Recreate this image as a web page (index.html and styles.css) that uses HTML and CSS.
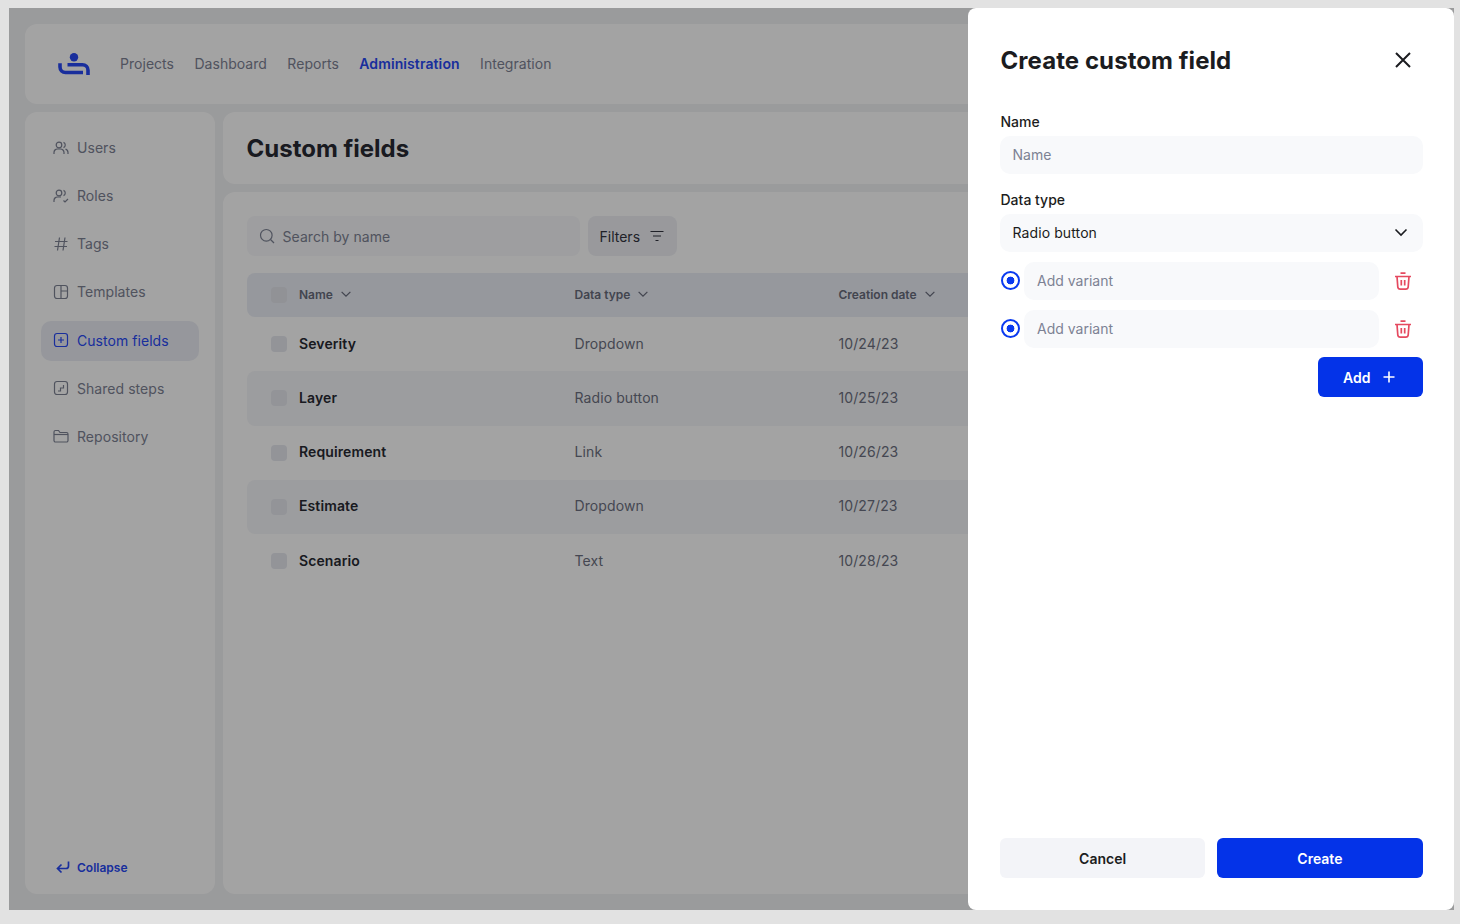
FILE: index.html
```html
<!DOCTYPE html>
<html lang="en">
<head>
	<title>Custom fields</title>
	<meta charset="utf-8" />
	<link rel="stylesheet" href="styles.css">
</head>
<body>
	<div class="frame">
		<header class="topbar">
			<svg class="logo" width="32" height="22" viewBox="0 0 32 22">
				<circle cx="16" cy="4.200" r="4.200" fill="#2849f5" />
				<path d="M2 10.300V14a5.500 5.500 0 0 0 5.500 5.500H25M9.500 11.700h15a5.500 5.500 0 0 1 5.500 5.500V22" fill="none" stroke="#2849f5" stroke-width="3.600" />
			</svg>
			<nav class="topnav">
				<a>Projects</a>
				<a>Dashboard</a>
				<a>Reports</a>
				<a class="current">Administration</a>
				<a>Integration</a>
			</nav>
		</header>

		<div class="workspace">
			<aside class="sidebar">
				<ul class="menu">
					<li class="menu-item">
						<svg class="ico" viewBox="0 0 16 16"><circle cx="6" cy="5" r="2.800" /><path d="M1 14v-1.500A3.500 3.500 0 0 1 4.500 9h3a3.500 3.500 0 0 1 3.500 3.500V14M10.500 2.400a2.800 2.800 0 0 1 0 5.200M12.500 9.200a3.500 3.500 0 0 1 2.500 3.300V14" /></svg>
						Users
					</li>
					<li class="menu-item">
						<svg class="ico" viewBox="0 0 16 16"><circle cx="6" cy="5" r="2.800" /><path d="M1 14v-1.500A3.500 3.500 0 0 1 4.500 9H8M10.500 2.400a2.800 2.800 0 0 1 0 5.200M10.500 12.500l1.500 1.500 3-3" /></svg>
						Roles
					</li>
					<li class="menu-item">
						<svg class="ico" viewBox="0 0 16 16"><path d="M6.500 1.500L4.500 14.500M12 1.500L10 14.500M2 5.500h12.500M1.500 10.500H14" /></svg>
						Tags
					</li>
					<li class="menu-item">
						<svg class="ico" viewBox="0 0 16 16"><rect x="1.500" y="1.500" width="13" height="13" rx="2.500" /><path d="M8 1.500v13M8 7h6.500" /></svg>
						Templates
					</li>
					<li class="menu-item active">
						<svg class="ico" viewBox="0 0 16 16"><rect x="1.500" y="1.500" width="13" height="13" rx="2.500" /><path d="M8 5v6M5 8h6" /></svg>
						Custom fields
					</li>
					<li class="menu-item">
						<svg class="ico" viewBox="0 0 16 16"><rect x="1.500" y="1.500" width="13" height="13" rx="2.500" /><path d="M5 11h2.500V8H10.500V5" /></svg>
						Shared steps
					</li>
					<li class="menu-item">
						<svg class="ico" viewBox="0 0 16 16"><path d="M1 4a1.500 1.500 0 0 1 1.500-1.500h3L7 4.500h6.500A1.500 1.500 0 0 1 15 6v6.500a1.500 1.500 0 0 1-1.500 1.500h-11A1.500 1.500 0 0 1 1 12.500z" /><path d="M1 6.500h14" /></svg>
						Repository
					</li>
				</ul>
				<a class="collapse">
					<svg class="ico" viewBox="0 0 16 16"><path d="M13.500 2.500V7a2.500 2.500 0 0 1-2.500 2.500H3M6.500 5.500L2.500 9.500l4 4" /></svg>
					Collapse
				</a>
			</aside>

			<main class="content">
				<section class="title-card">
					<h1>Custom fields</h1>
				</section>
				<section class="list-card">
					<div class="toolbar">
						<div class="search">
							<svg class="ico" viewBox="0 0 16 16"><circle cx="7.300" cy="7.300" r="5.800" /><path d="M11.500 11.500L15 15" /></svg>
							Search by name
						</div>
						<div class="filters">
							Filters
							<svg class="ico" viewBox="0 0 16 16"><path d="M1.500 3.500h13M4 8h8M6.500 12.500h3" /></svg>
						</div>
					</div>
					<div class="table">
						<div class="row head">
							<span class="check"></span>
							<span class="cell">Name <svg class="ico chev" viewBox="0 0 16 16"><path d="M3 5.500l5 5 5-5" /></svg></span>
							<span class="cell">Data type <svg class="ico chev" viewBox="0 0 16 16"><path d="M3 5.500l5 5 5-5" /></svg></span>
							<span class="cell">Creation date <svg class="ico chev" viewBox="0 0 16 16"><path d="M3 5.500l5 5 5-5" /></svg></span>
						</div>
						<div class="row">
							<span class="check"></span><strong>Severity</strong><span>Dropdown</span><span>10/24/23</span>
						</div>
						<div class="row striped">
							<span class="check"></span><strong>Layer</strong><span>Radio button</span><span>10/25/23</span>
						</div>
						<div class="row">
							<span class="check"></span><strong>Requirement</strong><span>Link</span><span>10/26/23</span>
						</div>
						<div class="row striped">
							<span class="check"></span><strong>Estimate</strong><span>Dropdown</span><span>10/27/23</span>
						</div>
						<div class="row">
							<span class="check"></span><strong>Scenario</strong><span>Text</span><span>10/28/23</span>
						</div>
					</div>
				</section>
			</main>
		</div>

		<div class="scrim"></div>

		<form class="drawer">
			<div class="drawer-head">
				<h2>Create custom field</h2>
				<svg class="close" width="24" height="24" viewBox="0 0 24 24"><path d="M5 5l14 14M19 5L5 19" /></svg>
			</div>

			<label class="field-label">Name</label>
			<div class="input placeholder">Name</div>

			<label class="field-label second">Data type</label>
			<div class="input select">
				Radio button
				<svg class="ico dark" viewBox="0 0 16 16"><path d="M2.500 5.500L8 11l5.500-5.500" /></svg>
			</div>

			<div class="variant">
				<span class="radio"></span>
				<div class="input placeholder">Add variant</div>
				<svg class="trash" width="20" height="20" viewBox="0 0 20 20"><path d="M7.500 2.200h5M2 5.500h16M4 5.500l.8 10.500a2.500 2.500 0 0 0 2.500 2.200h5.400a2.500 2.500 0 0 0 2.500-2.200L16 5.500M8.300 9v5.500M11.700 9v5.500" /></svg>
			</div>
			<div class="variant">
				<span class="radio"></span>
				<div class="input placeholder">Add variant</div>
				<svg class="trash" width="20" height="20" viewBox="0 0 20 20"><path d="M7.500 2.200h5M2 5.500h16M4 5.500l.8 10.500a2.500 2.500 0 0 0 2.500 2.200h5.400a2.500 2.500 0 0 0 2.500-2.200L16 5.500M8.300 9v5.500M11.700 9v5.500" /></svg>
			</div>

			<div class="add-line">
				<button type="button" class="btn primary add">
					Add
					<svg width="16" height="16" viewBox="0 0 16 16"><path d="M8 2.500v11M2.500 8h11" /></svg>
				</button>
			</div>

			<div class="drawer-foot">
				<button type="button" class="btn secondary">Cancel</button>
				<button type="button" class="btn primary">Create</button>
			</div>
		</form>
	</div>
</body>
</html>
```

FILE: styles.css
```css
* {
	box-sizing: border-box;
}

html, body {
	height: 100%;
}

body {
	margin: 0;
	padding: 8px 6px 14px 9px;
	background-color: #e2e2e2;
	font-family: Inter, "Liberation Sans", sans-serif;
	font-size: 14px;
	color: #282a32;
	overflow: hidden;
}

ul {
	margin: 0;
	padding: 0;
	list-style: none;
}

h1, h2 {
	margin: 0;
	font-size: 24px;
	line-height: 40px;
	font-weight: 700;
}

.ico {
	width: 16px;
	height: 16px;
	flex: none;
	fill: none;
	stroke: currentColor;
	stroke-width: 1.2;
}

.frame {
	position: relative;
	height: 902px;
	padding: 16px;
	background-color: #f1f2f4;
	display: flex;
	flex-direction: column;
	gap: 8px;
	overflow: hidden;
}

.scrim {
	position: absolute;
	inset: 0;
	background-color: rgba(0, 0, 0, 0.36);
}

/* top bar */
.topbar {
	height: 80px;
	flex: none;
	padding-left: 33px;
	background-color: #fff;
	border-radius: 12px;
	display: flex;
	align-items: center;
	gap: 30px;
}

.logo {
	flex: none;
}

.topnav {
	display: flex;
	gap: 20.450px;
	margin-bottom: 2px;
	color: #7d8294;
	letter-spacing: 0.03px;
}

.topnav .current {
	color: #2849f5;
	font-weight: 600;
	letter-spacing: 0.1px;
}

/* sidebar */
.workspace {
	flex: 1;
	min-height: 0;
	display: flex;
	gap: 8px;
}

.sidebar {
	width: 189.500px;
	flex: none;
	padding: 16px;
	background-color: #fff;
	border-radius: 12px;
	display: flex;
	flex-direction: column;
	justify-content: space-between;
}

.menu {
	display: flex;
	flex-direction: column;
	gap: 8.150px;
}

.menu-item {
	height: 40px;
	padding: 0 0 1px 12px;
	border-radius: 10px;
	color: #7d8294;
	display: flex;
	align-items: center;
	gap: 8px;
	letter-spacing: 0.05px;
}

.menu-item.active {
	background-color: #ebedf4;
	color: #2849f5;
}

.collapse {
	padding: 0 0 3px 14px;
	color: #2849f5;
	font-size: 12px;
	font-weight: 600;
	display: flex;
	align-items: center;
	gap: 6px;
}

.collapse .ico {
	stroke-width: 1.700;
}

/* content */
.content {
	flex: 1;
	min-width: 0;
	display: flex;
	flex-direction: column;
	gap: 8px;
}

.title-card {
	height: 72px;
	flex: none;
	padding: 17px 24px 0;
	background-color: #fff;
	border-radius: 12px;
}

.list-card {
	flex: 1;
	padding: 24px;
	background-color: #fff;
	border-radius: 12px;
}

.toolbar {
	display: flex;
	gap: 8px;
	margin-bottom: 17px;
}

.search, .filters {
	height: 40px;
	border-radius: 8px;
	display: flex;
	align-items: center;
}

.search {
	width: 333px;
	padding-left: 12px;
	gap: 8px;
	background-color: #f7f8fa;
	color: #7d8294;
	letter-spacing: 0.05px;
}

.filters {
	width: 89.500px;
	padding-left: 12px;
	gap: 9px;
	background-color: #eff0f5;
	color: #33353f;
}

.row {
	height: 54.250px;
	padding-left: 24px;
	border-radius: 8px;
	display: grid;
	grid-template-columns: 28.500px 275.500px 264px 1fr;
	align-items: center;
	color: #6c7080;
	letter-spacing: 0.1px;
}

.row strong, .row span:not(.check) {
	margin-bottom: 2px;
}

.row strong {
	color: #282a32;
	font-weight: 600;
}

.row.striped {
	background-color: #f5f6f9;
}

.row.head {
	height: 44px;
	background-color: #ebeef6;
	font-size: 12px;
	font-weight: 600;
	color: #686c7c;
	letter-spacing: 0;
}

.cell {
	display: flex;
	align-items: center;
	gap: 6px;
}

.chev {
	width: 14px;
	height: 14px;
	stroke-width: 1.400;
}

.check {
	width: 16px;
	height: 16px;
	border-radius: 4px;
	background-color: #e6e8ee;
}

.head .check {
	background-color: #e3e5eb;
}

/* drawer */
.drawer {
	position: absolute;
	top: 0;
	right: 0;
	bottom: 0;
	width: 486px;
	padding: 32px 31.500px 32px 32px;
	background-color: #fff;
	border-radius: 8px;
	display: flex;
	flex-direction: column;
}

.drawer-head {
	display: flex;
	align-items: center;
	justify-content: space-between;
	margin-bottom: 31px;
	color: #1b1c20;
}

.drawer-head h2 {
	padding: 1px 0 0 .5px;
	letter-spacing: 0.07px;
}

.close {
	margin: 0 7.500px 1px 0;
	fill: none;
	stroke: #1b1c20;
	stroke-width: 2;
}

.field-label {
	line-height: 20px;
	margin-bottom: 4px;
	padding-left: .5px;
	font-weight: 500;
	color: #1b1c20;
}

.field-label.second {
	margin-top: 16px;
}

.input {
	height: 38px;
	padding: 0 14px 2px 12.500px;
	background-color: #f8f9fb;
	border-radius: 10px;
	display: flex;
	align-items: center;
	letter-spacing: 0.1px;
	color: #1b1c20;
}

.placeholder {
	color: #7d8294;
	letter-spacing: 0;
}

.select {
	justify-content: space-between;
}

.select .dark {
	stroke-width: 1.600;
}

.variant {
	margin-top: 10px;
	display: flex;
	align-items: center;
}

.variant .input {
	flex: 1;
	padding-left: 12.800px;
}

.radio {
	width: 19px;
	height: 19px;
	margin: 0 4.200px 1px 1px;
	flex: none;
	border: 2px solid #0a3af0;
	border-radius: 50%;
	background: radial-gradient(circle, #0a3af0 0 3.600px, transparent 4.200px);
}

.trash {
	margin: 0 9.500px 1px 14.500px;
	flex: none;
	fill: none;
	stroke: #e5495f;
	stroke-width: 1.700;
}

.add-line {
	margin-top: 9px;
	display: flex;
	justify-content: flex-end;
}

.btn {
	height: 40px;
	border: 0;
	border-radius: 6px;
	font-family: inherit;
	font-size: 14px;
	font-weight: 600;
	display: flex;
	align-items: center;
	justify-content: center;
}

.btn.primary {
	background-color: #0433e8;
	color: #fff;
}

.btn.secondary {
	background-color: #f3f4f8;
	color: #1b1c20;
}

.add {
	width: 104.500px;
	gap: 11px;
	padding-bottom: 1px;
}

.add svg {
	fill: none;
	stroke: #fff;
	stroke-width: 1.600;
}

.drawer-foot {
	margin-top: auto;
	display: grid;
	grid-template-columns: 1fr 1fr;
	gap: 12px;
}
```
